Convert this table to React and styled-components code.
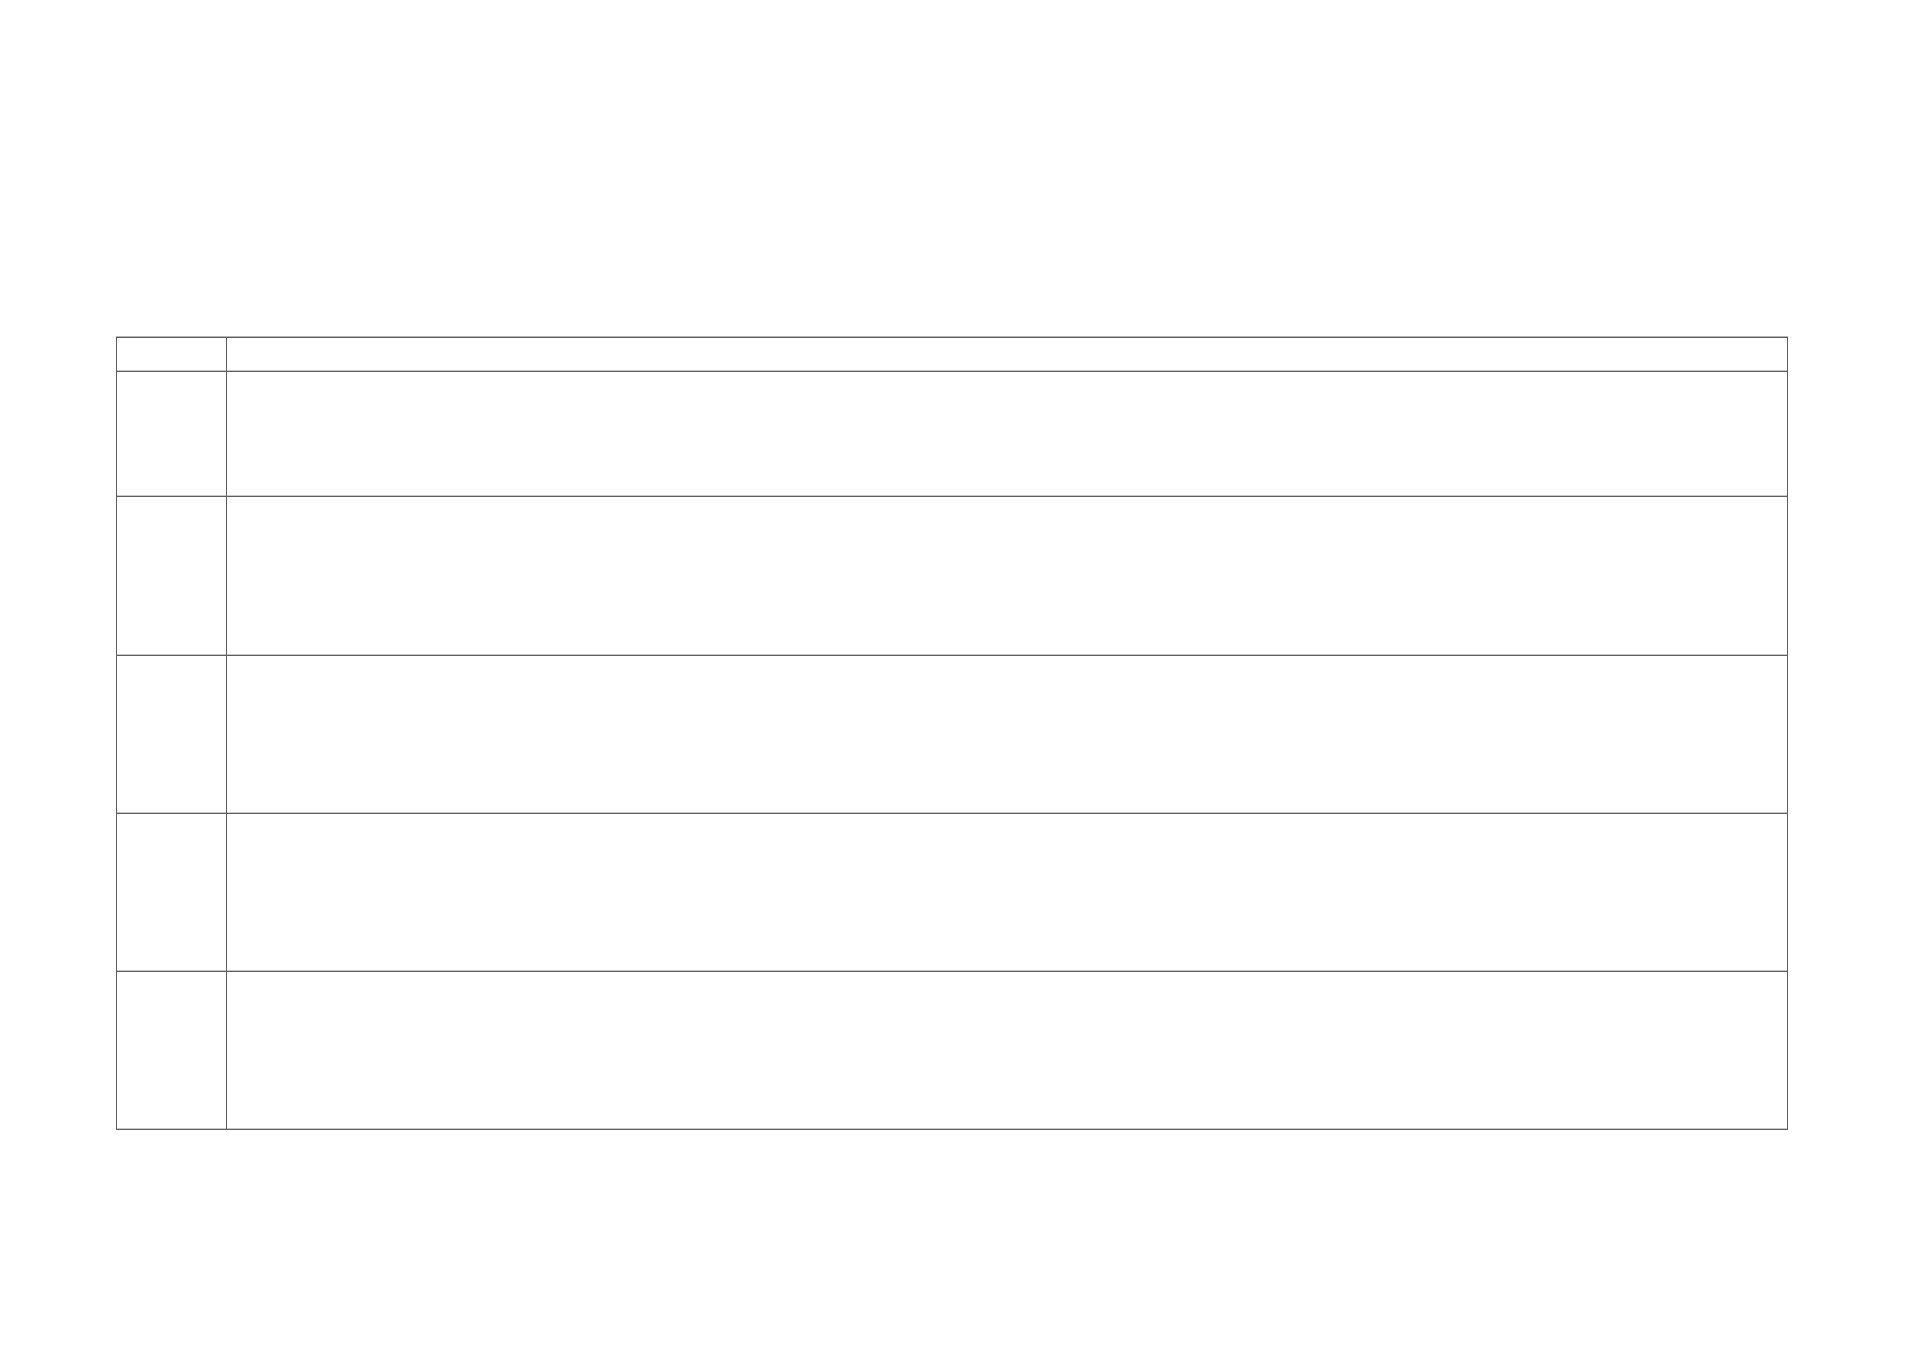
import React from "react";
import styled, { createGlobalStyle } from "styled-components";

const Global = createGlobalStyle`
  html, body { margin: 0; padding: 0; background: #ffffff; }
  body { font-family: "Liberation Sans", Arial, sans-serif; }
`;

const Page = styled.div`
  padding: 337px 0 0 116px;
  min-height: 1351px;
  box-sizing: border-box;
`;

const Grid = styled.div`
  display: grid;
  grid-template-columns: 110px 1561px;
  grid-template-rows: 34px 125px 159px 158px 158px 158px;
  width: max-content;
  border-top: 1px solid #5e5e5e;
  border-left: 1px solid #5e5e5e;
  box-shadow: 0 -1px 0 #b4b4b4;
`;

const Cell = styled.div`
  border-right: 1px solid #5e5e5e;
  border-bottom: 1px solid #5e5e5e;
  box-shadow: inset 0 -1px 0 #c8c8c8;
  font-size: 14px;
  color: #333;
`;

const rows = 6;

export default function App() {
  return (
    <>
      <Global />
      <Page>
        <Grid role="table">
          {Array.from({ length: rows }).map((_, i) => (
            <React.Fragment key={i}>
              <Cell role="cell" />
              <Cell role="cell" />
            </React.Fragment>
          ))}
        </Grid>
      </Page>
    </>
  );
}
